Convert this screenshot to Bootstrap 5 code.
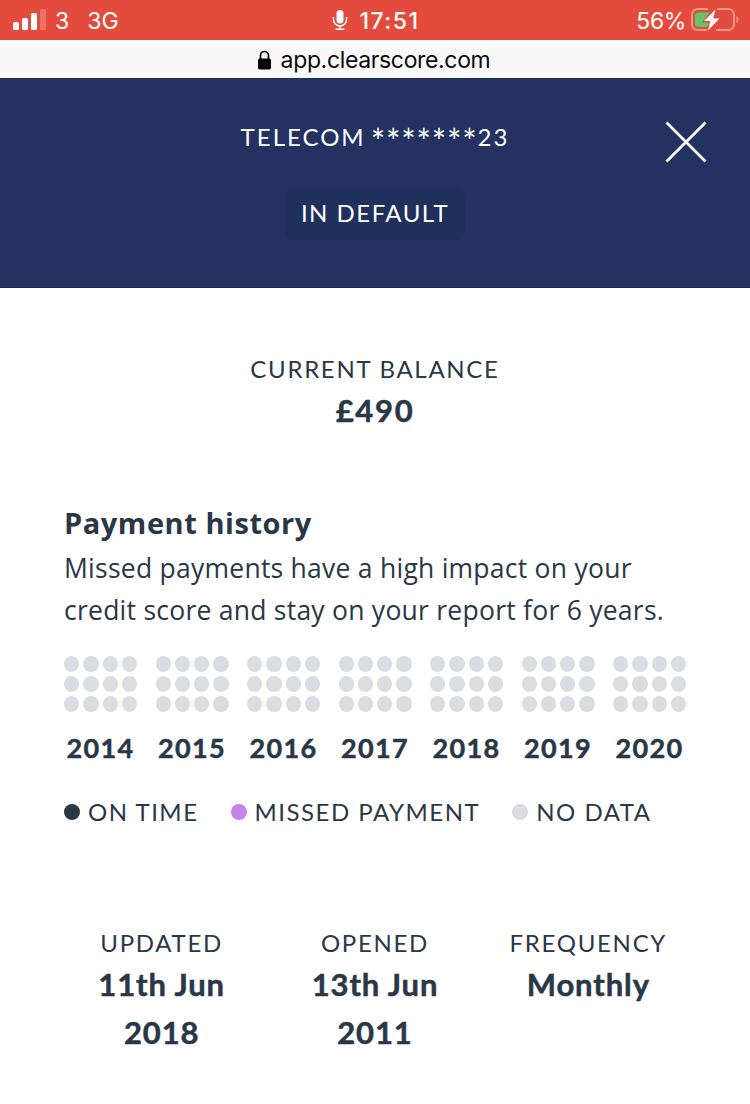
<!DOCTYPE html>
<html lang="en">
<head>
<meta charset="utf-8">
<meta name="viewport" content="width=device-width, initial-scale=1">
<title>ClearScore</title>
<link href="https://cdn.jsdelivr.net/npm/bootstrap@5.3.0/dist/css/bootstrap.min.css" rel="stylesheet">
<style>
  body { font-family: Lato, sans-serif; color: #2a3746; background: #fff; overflow: hidden; }
  .status-bar { height: 40px; background: #e34c3d; font: 400 23px/42px Inter, sans-serif; padding-left: 13px; padding-right: 11px; }
  .status-bar span { position: relative; top: 1px; }
  .status-side { flex: 1 1 0; }
  .status-time { font-weight: 500; letter-spacing: 1.5px; }
  .mic { margin-right: 10px; margin-left: -1px; }
  .charge { letter-spacing: -.4px; }
  .carrier { margin-left: 8px; }
  .network { margin-left: 18px; }
  .address-bar { height: 38px; background: #f9f9fa; font: 400 23px/38px Inter, sans-serif; letter-spacing: -.35px; color: #0a0a0a; padding-top: 2px; }
  .padlock { margin-left: -3px; }
  .host { margin-left: 9px; }
  .account-head { height: 210px; background: #243262; border-top: 1px solid #1d2a52; border-bottom: 1px solid #1d2a52; padding-top: 40px; }
  .caps { font-size: 24px; line-height: 36px; letter-spacing: 1.7px; white-space: nowrap; }
  .account-name { letter-spacing: 2px; }
  .stars { font-size: 34px; line-height: 0; vertical-align: -8px; letter-spacing: .8px; margin-left: -3px; }
  .state-pill { height: 52px; width: 180px; background: #20305c; border-radius: 8px; line-height: 50px; margin-top: 33px; letter-spacing: 1.5px; }
  .close-x { top: 42px; right: 43px; line-height: 0; }
  .figure { font-size: 31px; line-height: 48px; font-weight: 700; letter-spacing: .9px; margin-top: -1px; -webkit-text-stroke: .5px currentColor; }
  .balance { padding-top: 63px; }
  .balance .figure { letter-spacing: 1.7px; }
  .history { padding: 67px 64px 0; }
  .history h2 { font-family: "Open Sans", sans-serif; font-size: 29px; line-height: 44px; font-weight: 700; letter-spacing: .55px; margin: 0; white-space: nowrap; }
  .history p { font-family: "Open Sans", sans-serif; font-size: 26.5px; line-height: 42px; letter-spacing: .25px; margin: 2px 0 0; white-space: nowrap; }
  .year-row { padding-top: 25px; }
  .year-box { width: 73px; }
  .months { display: grid; grid-template-columns: repeat(4, 1fr); grid-auto-rows: 16px; gap: 4px; }
  .months i { background: #dcdde2; border-radius: 50%; }
  .year-name { font-size: 27px; line-height: 40px; font-weight: 700; letter-spacing: 1.4px; margin-top: 16px; white-space: nowrap; -webkit-text-stroke: .5px currentColor; }
  .key { margin-top: 26px; letter-spacing: 1.5px; gap: 32px; }
  .key > div { gap: 8px; }
  .key-dot { width: 16px; height: 16px; border-radius: 50%; flex: none; }
  .on-time { background: #2a3746; }
  .missed { background: #c582eb; }
  .no-data { background: #dcdde2; }
  .facts { padding: 95px 55px 0; }
</style>
</head>
<body>
<div class="status-bar d-flex text-white">
  <div class="status-side d-flex align-items-center">
    <svg width="34" height="22" viewBox="0 0 34 22" fill="#fff"><rect y="13" width="6" height="8" rx="1.5"/><rect x="9" y="9" width="6" height="12" rx="1.5"/><rect x="18" y="4" width="6" height="17" rx="1.5"/><rect x="27" y="0" width="6" height="21" rx="1.5" opacity=".22"/></svg>
    <span class="carrier">3</span><span class="network">3G</span>
  </div>
  <div class="d-flex align-items-center">
    <svg class="mic" width="18" height="22" viewBox="0 0 18 22"><rect x="5.500" y="1" width="7" height="13.500" rx="3.500" fill="#fff"/><path d="M2.500 8v2.500a6.500 6.500 0 0 0 13 0V8M9 17v3M4.500 20.300h9" fill="none" stroke="#fff" stroke-width="1.500"/></svg>
    <span class="status-time">17:51</span>
  </div>
  <div class="status-side d-flex align-items-center justify-content-end">
    <span class="charge">56%</span>
    <svg class="ms-1" width="49" height="26" viewBox="0 0 49 26"><path d="M18 2H7.500A5.500 5.500 0 0 0 2 7.500v10A5.500 5.500 0 0 0 7.500 23H17M27 2h11.500A5.500 5.500 0 0 1 44 7.500v10a5.500 5.500 0 0 1-5.500 5.500H26" fill="none" stroke="#fff" stroke-opacity=".42" stroke-width="2"/><path d="M46.500 9v7q2-1 2-3.500t-2-3.500" fill="#fff" opacity=".42"/><path d="M20 5.500H8a3 3 0 0 0-3 3v8.500a3 3 0 0 0 3 3h9.500l1.300-4.500h-7z" fill="#64c466"/><path d="M25.500 2.500 14 14h6.300L18 23.500 29.500 11.500h-6.300z" fill="#fff"/></svg>
  </div>
</div>
<div class="address-bar d-flex justify-content-center align-items-center">
  <svg class="padlock" width="15" height="20" viewBox="0 0 15 20"><rect x="1" y="8.500" width="13" height="11" rx="1.800"/><path d="M3.500 9V5.500a4 4 0 0 1 8 0V9" fill="none" stroke="#000" stroke-width="1.700"/></svg>
  <span class="host">app.clearscore.com</span>
</div>
<header class="account-head position-relative text-white d-flex flex-column align-items-center">
  <div class="caps account-name">TELECOM <span class="stars">*******</span>23</div>
  <div class="caps state-pill text-center">IN DEFAULT</div>
  <div class="close-x position-absolute"><svg width="42" height="42" viewBox="0 0 42 42"><path d="M1.500 1.500 40.500 40.500M40.500 1.500 1.500 40.500" stroke="#fff" stroke-width="2.800"/></svg></div>
</header>
<main>
  <section class="balance text-center">
    <div class="caps">CURRENT BALANCE</div>
    <div class="figure">£490</div>
  </section>
  <section class="history">
    <h2>Payment history</h2>
    <p>Missed payments have a high impact on your<br>credit score and stay on your report for 6 years.</p>
    <div class="year-row d-flex justify-content-between" id="years"></div>
    <div class="key d-flex align-items-center caps">
      <div class="d-flex align-items-center"><span class="key-dot on-time"></span><span>ON TIME</span></div>
      <div class="d-flex align-items-center"><span class="key-dot missed"></span><span>MISSED PAYMENT</span></div>
      <div class="d-flex align-items-center"><span class="key-dot no-data"></span><span>NO DATA</span></div>
    </div>
  </section>
  <section class="facts"><div class="row g-0 text-center">
    <div class="col-4"><div class="caps">UPDATED</div><div class="figure">11th Jun<br>2018</div></div>
    <div class="col-4"><div class="caps">OPENED</div><div class="figure">13th Jun<br>2011</div></div>
    <div class="col-4"><div class="caps">FREQUENCY</div><div class="figure">Monthly</div></div>
  </div></section>
</main>
<script>
  for (let y = 2014; y <= 2020; y++) {
    document.getElementById('years').insertAdjacentHTML('beforeend',
      `<div class="year-box text-center"><div class="months">${'<i></i>'.repeat(12)}</div><div class="year-name">${y}</div></div>`);
  }
</script>
<script src="https://cdn.jsdelivr.net/npm/bootstrap@5.3.0/dist/js/bootstrap.bundle.min.js"></script>
</body>
</html>
